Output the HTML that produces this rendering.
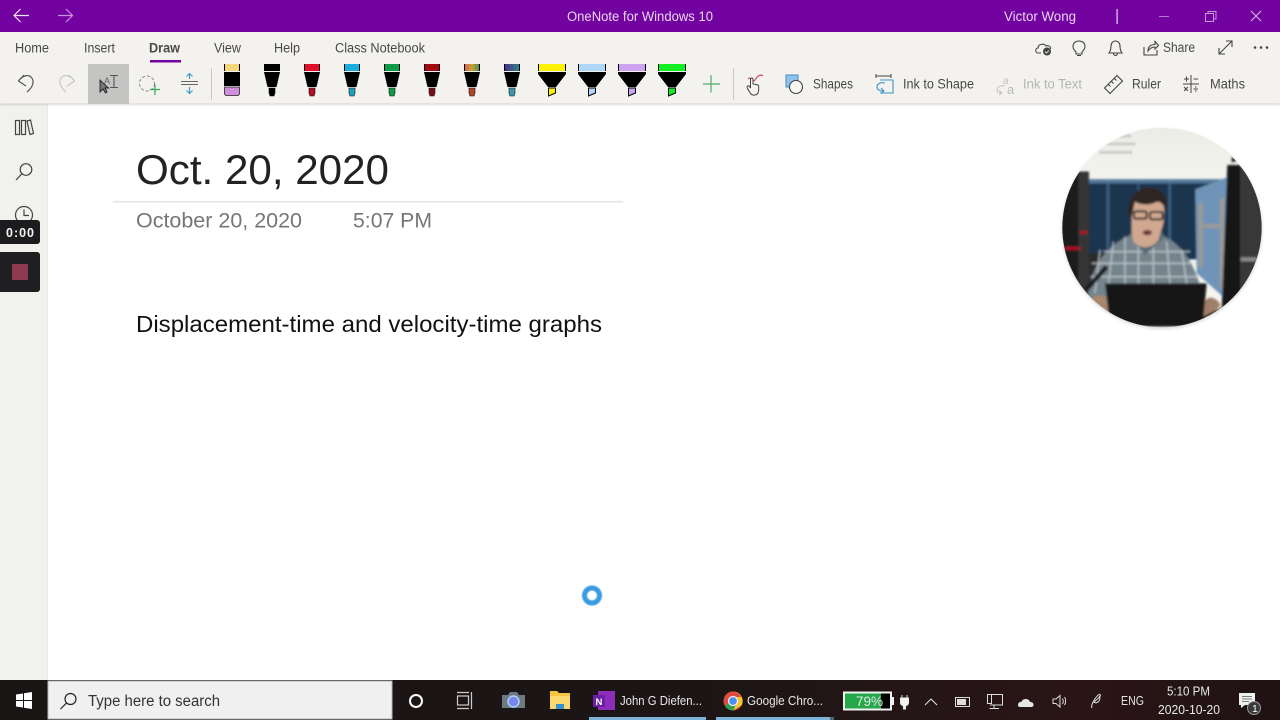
<!DOCTYPE html>
<html lang="en"><head><meta charset="utf-8"><title>OneNote for Windows 10</title>
<style>
html,body{margin:0;padding:0;width:1280px;height:720px;overflow:hidden;background:#fff}
svg{display:block;position:absolute;left:0;top:0;filter:blur(.3px)}
text{font-family:"Liberation Sans",sans-serif;white-space:pre}
</style></head><body>
<svg width="1280" height="720" viewBox="0 0 1280 720" xmlns="http://www.w3.org/2000/svg">
<defs>
<linearGradient id="tb" x1="0" x2="1" y1="0" y2="0"><stop offset="0" stop-color="#191515"/><stop offset=".55" stop-color="#1d1515"/><stop offset=".85" stop-color="#2a1516"/><stop offset="1" stop-color="#1f1214"/></linearGradient>
<linearGradient id="rb" x1="0" x2="1" y1="0" y2="0"><stop offset="0" stop-color="#d85c52"/><stop offset=".5" stop-color="#c9a030"/><stop offset="1" stop-color="#3a8f56"/></linearGradient>
<linearGradient id="nb" x1="0" x2="1" y1="0" y2="0"><stop offset="0" stop-color="#4b2a8c"/><stop offset="1" stop-color="#2d8a85"/></linearGradient>
<linearGradient id="wall" x1="0" x2="0" y1="0" y2="1"><stop offset="0" stop-color="#ecece6"/><stop offset=".3" stop-color="#f6f6f0"/></linearGradient>
<filter id="bl" x="-5%" y="-5%" width="110%" height="110%"><feGaussianBlur stdDeviation="3.500"/></filter>
<filter id="sh" x="-20%" y="-20%" width="140%" height="140%"><feGaussianBlur stdDeviation="1.500"/></filter>
<filter id="s1"><feGaussianBlur stdDeviation=".6"/></filter>
<filter id="s2" x="-50%" y="-50%" width="200%" height="200%"><feGaussianBlur stdDeviation=".5"/></filter>
<clipPath id="cam"><circle cx="336" cy="323" r="299"/></clipPath>
<g id="pen">
<rect x="-8" y="64" width="16" height="7" fill="var(--c)"/>
<path d="M-7.500 64v7M7.500 64v7" stroke="#000" stroke-width="1"/>
<path d="M-8 72H8L4.500 87H-4.500Z" fill="#000"/>
<path d="M-3 88H3V93L2 96H-2L-3 93Z" fill="var(--t)" stroke="#111" stroke-width=".6"/>
</g>
<g id="hl">
<rect x="-14" y="64" width="28" height="7" fill="var(--c)"/>
<path d="M-13.500 64v7M13.500 64v7" stroke="#000" stroke-width="1"/>
<path d="M-14 72H14V74L4 87H-4L-14 74Z" fill="#000"/>
<path d="M-3.500 88H3.500V93L-3.500 96Z" fill="var(--c)" stroke="#000" stroke-width="1"/>
</g>
</defs>

<!-- title bar -->
<rect width="1280" height="32" fill="#7303a1"/>
<g fill="none" stroke="#eee3f3" stroke-width="1.200"><path d="M14 15.500H29M20.500 9L14 15.500L20.500 22"/></g>
<g fill="none" stroke="#c88fdb" stroke-width="1.200"><path d="M58 15.500H72M66 9L72.500 15.500L66 22"/></g>
<text x="567" y="21" font-size="13.500" fill="#e8d6f0" textLength="146" lengthAdjust="spacingAndGlyphs">OneNote for Windows 10</text>
<text x="1004" y="21" font-size="13.500" fill="#e8d6f0" textLength="72" lengthAdjust="spacingAndGlyphs">Victor Wong</text>
<rect x="1116.500" y="9" width="1.200" height="15" fill="#e8d6f0"/>
<rect x="1159" y="16" width="10" height="1" fill="#b878d0"/>
<g fill="none" stroke="#c39ad6" stroke-width="1"><rect x="1205.500" y="13.500" width="8" height="8"/><path d="M1208 13.500V11.500H1216V19H1213.500"/></g>
<path d="M1251 11L1261 21M1261 11L1251 21" stroke="#d9bde5" stroke-width="1"/>

<!-- ribbon -->
<rect y="32" width="1280" height="72" fill="#f3f2ef"/>
<rect x="0" y="104" width="48" height="576" fill="#f1f1ee"/>
<rect x="0" y="103.500" width="1280" height="2" fill="#000" opacity=".1" filter="url(#s1)"/>
<rect x="47" y="106" width="1" height="574" fill="#e9e9e7"/>
<g font-size="13.500" fill="#484848">
<text x="15" y="52.500" textLength="34" lengthAdjust="spacingAndGlyphs">Home</text>
<text x="84" y="52.500" textLength="31" lengthAdjust="spacingAndGlyphs">Insert</text>
<text x="149" y="52.500" textLength="31" lengthAdjust="spacingAndGlyphs" font-weight="700" fill="#4a4a4a">Draw</text>
<text x="214" y="52.500" textLength="27" lengthAdjust="spacingAndGlyphs">View</text>
<text x="274" y="52.500" textLength="26" lengthAdjust="spacingAndGlyphs">Help</text>
<text x="335" y="52.500" textLength="90" lengthAdjust="spacingAndGlyphs">Class Notebook</text>
<text x="1163" y="52" textLength="32" lengthAdjust="spacingAndGlyphs">Share</text>
<text x="813" y="88.500" textLength="40" lengthAdjust="spacingAndGlyphs">Shapes</text>
<text x="903" y="88.500" textLength="71" lengthAdjust="spacingAndGlyphs">Ink to Shape</text>
<text x="1023" y="88.500" textLength="59" lengthAdjust="spacingAndGlyphs" fill="#b4b4b2">Ink to Text</text>
<text x="1132" y="88.500" textLength="29" lengthAdjust="spacingAndGlyphs">Ruler</text>
<text x="1210" y="88.500" textLength="35" lengthAdjust="spacingAndGlyphs">Maths</text>
</g>
<rect x="150" y="60" width="31" height="2.500" fill="#7303a1"/>

<!-- toolbar left -->
<g fill="none" stroke="#555" stroke-width="1.200"><path d="M24 75L18.500 81L26 86M18.500 81C22 76 28 74 31 77C35 81 33 87 27 92"/></g>
<g fill="none" stroke="#c6c6c4" stroke-width="1.200"><path d="M69 75L74.500 81L67 86M74.500 81C71 76 65 74 62 77C58 81 60 87 66 92"/></g>
<rect x="88" y="64" width="41" height="40" fill="#c4c4c2"/>
<text x="104" y="84" font-size="9" fill="#666">A</text>
<path d="M110 75.500H118M114 75.500V87.500M110 87.500H118" stroke="#555" stroke-width="1.100" fill="none"/>
<path d="M100 80V92L103 89L105.500 93L107 92L105 88H108.500Z" fill="#777" stroke="#222" stroke-width=".9"/>
<circle cx="147" cy="83.500" r="7.500" fill="none" stroke="#888" stroke-width="1" stroke-dasharray="3 2"/>
<path d="M155 84.500V95M150 89.500H160" stroke="#3aa653" stroke-width="1.200"/>
<path d="M181 81.500H198M181 84.500H198" stroke="#666" stroke-width="1"/>
<path d="M189.500 79V73.500M186.500 76.500L189.500 73.500L192.500 76.500M189.500 87V93.500M186.500 90.500L189.500 93.500L192.500 90.500" stroke="#3a97c9" stroke-width="1.100" fill="none"/>
<rect x="211" y="68" width="1" height="32" fill="#c8c8c6"/>

<!-- eraser -->
<rect x="224" y="64" width="16" height="7" fill="#f3d67e"/><path d="M224.500 64v7M239.500 64v7" stroke="#000"/>
<rect x="224" y="72" width="16" height="14" fill="#000"/>
<path d="M224.500 87H239.500V93Q239.500 95.500 237 95.500H227Q224.500 95.500 224.500 93Z" fill="#cf8fdd" stroke="#222" stroke-width=".8"/>
<!-- pens -->
<use href="#pen" x="272" style="--c:#000;--t:#000"/>
<use href="#pen" x="312" style="--c:#e2102a;--t:#b30f2a"/>
<use href="#pen" x="352" style="--c:#18aee0;--t:#20a0c0"/>
<use href="#pen" x="392" style="--c:#0f9a45;--t:#0f9a45"/>
<use href="#pen" x="432" style="--c:#a00a10;--t:#7b1015"/>
<use href="#pen" x="472" style="--c:url(#rb);--t:#b0452c"/>
<use href="#pen" x="512" style="--c:url(#nb);--t:#3d9aa5"/>
<use href="#hl" x="552" style="--c:#fff200"/>
<use href="#hl" x="592" style="--c:#aed6f8"/>
<use href="#hl" x="632" style="--c:#cda2f2"/>
<use href="#hl" x="672" style="--c:#12ef20"/>
<path d="M711 75V92.500M703 84H720" stroke="#4cae68" stroke-width="1.200"/>
<rect x="733" y="68" width="1" height="32" fill="#c8c8c6"/>
<!-- ink replay hand -->
<path d="M748 79C751 76 752 83 755 80C757 77 759 74 763 75.500" fill="none" stroke="#d2474f" stroke-width="1.200"/>
<path d="M751 94C749 91 746 87 747.500 86C749 85 750 87 750.500 88V79.500C750.500 77.500 753 77.500 753 79.500V84L758 85C759 86 759 90 758 93C757 95 753 96 751 94Z" fill="#f3f2ef" stroke="#444" stroke-width="1"/>
<!-- shapes -->
<rect x="786" y="75" width="12" height="12" fill="#8fc1ea" stroke="#3f8fcf" stroke-width="1"/>
<circle cx="796" cy="87" r="6.500" fill="#f6f6f4" stroke="#444" stroke-width="1.100"/>
<!-- ink to shape -->
<path d="M876 76H891M876 74V78M891 74V78" stroke="#444" stroke-width="1" fill="none"/>
<path d="M880 80H893V93H880" fill="none" stroke="#3a97c9" stroke-width="1.100"/>
<path d="M885 83C880 82 877 84 877 87C877 90 880 91 884 91M881 88L884 91L881 93" fill="none" stroke="#3a97c9" stroke-width="1.100"/>
<!-- ink to text -->
<text x="1003" y="84" font-size="10" font-style="italic" fill="#c0c0be">a</text>
<text x="1007" y="94" font-size="13" fill="#b8b8b6">a</text>
<path d="M1005 86C1000 85 997 87 997 90C997 92 999 93 1002 93M999 90.500L1002 93L999 95" fill="none" stroke="#c4c4c2" stroke-width="1"/>
<!-- ruler -->
<path d="M1104.500 88L1117 75.500L1122.500 81L1110 93.500Z M1108.500 84.500L1110.500 86.500M1111.500 81.500L1113.500 83.500M1114.500 78.500L1116.500 80.500" fill="none" stroke="#444" stroke-width="1.100"/>
<!-- maths -->
<path d="M1191 75V93M1183 84H1199M1184 79H1189M1186.500 76.500V81.500M1193.500 79H1198M1184 87L1188 91M1188 87L1184 91M1193.500 89H1198" stroke="#444" stroke-width="1" fill="none"/>
<circle cx="1195.800" cy="87" r=".7" fill="#444"/><circle cx="1195.800" cy="91" r=".7" fill="#444"/>

<!-- top right icons -->
<path d="M1041 53H1038C1035 53 1035 48 1038 48C1038 44 1044 43 1046 46C1049 45 1051 47 1050.500 49" fill="none" stroke="#444" stroke-width="1.100"/>
<circle cx="1047" cy="51.500" r="4" fill="#444"/><path d="M1045 51.500L1046.500 53L1049 50.500" stroke="#fff" stroke-width=".8" fill="none"/>
<path d="M1076 52C1074 50 1073 48.500 1073 46.500C1073 43 1075.500 41 1079 41C1082.500 41 1085 43 1085 46.500C1085 48.500 1084 50 1082 52V54H1076ZM1077 55.500H1081" fill="none" stroke="#444" stroke-width="1.100"/>
<path d="M1109 53C1110.500 51 1111 49 1111 46C1111 43 1113 41 1115.500 41C1118 41 1120 43 1120 46C1120 49 1120.500 51 1122 53ZM1113.500 53.500C1113.500 56 1117.500 56 1117.500 53.500" fill="none" stroke="#444" stroke-width="1.100"/>
<path d="M1144 47V55H1157V50M1148 51C1148 46 1151 44.500 1155 44.500V41.500L1158.500 45.500L1155 49V47C1152 47 1150 48 1148 51Z" fill="none" stroke="#444" stroke-width="1.100"/>
<path d="M1219 54L1232 41M1226 41H1232V47M1219 48V54H1225" fill="none" stroke="#444" stroke-width="1.100"/>
<g fill="#444"><circle cx="1255" cy="47.500" r="1.300"/><circle cx="1261" cy="47.500" r="1.300"/><circle cx="1267" cy="47.500" r="1.300"/></g>

<!-- sidebar icons -->
<g fill="none" stroke="#444" stroke-width="1.200">
<rect x="15.500" y="120.500" width="4" height="14"/><rect x="21.500" y="120.500" width="4" height="14"/><path d="M27 121L30.500 120L33.500 133.500L30 134.500Z"/>
<circle cx="26" cy="169.500" r="5.800"/><path d="M21.800 173.800L16 180"/>
<circle cx="24" cy="215" r="8.500"/><path d="M24 209.500V215.500H29"/>
</g>

<!-- recorder -->
<rect x="-6" y="220" width="46" height="24" rx="3" fill="#1c1c1e"/>
<text x="6" y="237" font-size="12.500" font-weight="700" fill="#f5f5f5" textLength="28" lengthAdjust="spacing">0:00</text>
<rect x="-6" y="252" width="46" height="40" rx="3" fill="#1f1e20"/>
<rect x="12" y="264" width="16" height="16" fill="#8b3a50"/>

<!-- page content -->
<g>
<text x="136" y="184" font-size="42" fill="#222" textLength="253" lengthAdjust="spacingAndGlyphs">Oct. 20, 2020</text>
<rect x="113" y="201" width="510" height="1.500" fill="#e4e4e4"/>
<text x="136" y="227.500" font-size="21.500" fill="#767676" textLength="166" lengthAdjust="spacingAndGlyphs">October 20, 2020</text>
<text x="353" y="227.500" font-size="21.500" fill="#767676" textLength="79" lengthAdjust="spacingAndGlyphs">5:07 PM</text>
<text x="136" y="332" font-size="23" fill="#111" textLength="466" lengthAdjust="spacingAndGlyphs">Displacement-time and velocity-time graphs</text>
</g>

<!-- busy cursor -->
<circle cx="592" cy="595.500" r="7.500" fill="none" stroke="#3a9be0" stroke-width="5" filter="url(#s2)"/>

<!-- webcam -->
<circle cx="1162" cy="229" r="100" fill="#000" opacity=".15" filter="url(#sh)"/>
<g transform="translate(1050 120) scale(.33333)">
<g clip-path="url(#cam)">
<rect x="30" y="20" width="620" height="620" fill="url(#wall)"/>
<g filter="url(#bl)">
<path d="M190 48H245M170 72H258M150 97H245" stroke="#a8a8a8" stroke-width="7" stroke-dasharray="7 4"/>
<rect x="115" y="178" width="400" height="240" fill="#1d3450"/>
<rect x="115" y="178" width="400" height="12" fill="#54789c"/>
<rect x="170" y="190" width="8" height="210" fill="#3d6184"/><rect x="262" y="190" width="6" height="190" fill="#36597b"/><rect x="355" y="190" width="8" height="200" fill="#3a5f82"/>
<rect x="115" y="400" width="60" height="130" fill="#2a2a2a"/>
<rect x="25" y="155" width="92" height="430" fill="#1e1e1e"/>
<rect x="85" y="155" width="32" height="400" fill="#363636"/>
<path d="M90 337H112M45 385H92" stroke="#b01020" stroke-width="9"/>
<path d="M436 208L535 170V550L525 535L440 460Z" fill="#6f94b8"/>
<path d="M452 250V440M516 235V505M452 318H516" stroke="#9a9a98" stroke-width="13" fill="none"/>
<path d="M532 135H572V520L515 570Z" fill="#141414"/>
<rect x="572" y="140" width="70" height="420" fill="#383838"/>
<rect x="572" y="412" width="48" height="12" fill="#8a8a88"/>
<path d="M545 110L565 120L545 128Z" fill="#222"/>
<!-- person -->
<path d="M114 525C125 450 150 390 240 345L345 350C400 380 430 430 450 495L470 560H120Z" fill="#74848c"/>
<g stroke="#d3dbe0" stroke-width="4" opacity=".75"><path d="M150 390L135 520M190 365L175 500M225 350V490M265 380V490M310 370V490M350 365L360 490M395 390L410 490M125 430H440M122 470H445M160 395H420"/></g>
<path d="M240 345L285 405L345 350L330 330H250Z" fill="#5a6a74"/>
<path d="M245 340V290C240 260 240 240 265 230H320C345 240 345 270 340 310L325 360C310 385 270 390 250 365Z" fill="#d0a890"/>
<path d="M236 285C230 235 260 200 300 203C340 205 360 240 345 275C345 255 330 240 315 248C290 260 260 250 255 245C250 260 250 275 245 290Z" fill="#2f2722"/>
<rect x="252" y="274" width="38" height="22" rx="5" fill="none" stroke="#1c1c1c" stroke-width="6"/>
<rect x="300" y="276" width="38" height="22" rx="5" fill="none" stroke="#1c1c1c" stroke-width="6"/>
<ellipse cx="292" cy="338" rx="14" ry="8" fill="#6b3a38"/>
<path d="M108 510L170 440" stroke="#1c1c1c" stroke-width="14"/>
<path d="M128 530C170 515 220 555 235 585L205 602L128 565Z" fill="#a9886f"/>
<path d="M455 560C465 525 495 525 512 555L470 600H450Z" fill="#9f7f69"/>
<path d="M165 490H470L458 620H180Z" fill="#191918"/>
<path d="M100 560L190 600L200 640H100Z" fill="#151515"/>
<path d="M460 590L540 550V640H440Z" fill="#151515"/>
</g>
</g>
</g>

<!-- taskbar -->
<rect y="680" width="1280" height="40" fill="url(#tb)"/>
<path d="M16 694.500L23 693.500V700H16ZM24 693.300L32 692V700H24ZM16 701H23V707.500L16 706.500ZM24 701H32V709L24 707.700Z" fill="#fff"/>
<rect x="48" y="681" width="344" height="38" fill="#f0f0f0"/>
<rect x="48" y="681" width="344" height="38" fill="none" stroke="#b8b8b8" stroke-width="1"/>
<g fill="none" stroke="#222" stroke-width="1.200"><circle cx="70.500" cy="699" r="5.500"/><path d="M66.500 703L60.500 709"/></g>
<text x="88" y="706" font-size="15.500" fill="#333" textLength="132" lengthAdjust="spacingAndGlyphs">Type here to search</text>
<circle cx="416" cy="701" r="6" fill="none" stroke="#fff" stroke-width="2"/>
<g fill="none" stroke="#ccc" stroke-width="1.200"><rect x="457.500" y="696" width="11" height="9"/><path d="M457 692.500H469M457 708.500H469M471.500 692V709"/></g>
<!-- camera -->
<path d="M502 695H508L510 692H517L519 695H525V708H502Z" fill="#6f7982"/>
<circle cx="513.500" cy="701.500" r="5.500" fill="#7a86f0" stroke="#a9d3f0" stroke-width="1.500"/>
<!-- folder -->
<path d="M550 691H557L559 693H570V709H550Z" fill="#f5c542"/>
<rect x="550" y="696" width="20" height="13" fill="#fbd872"/>
<rect x="556" y="704" width="8" height="5" fill="#3c8fd0"/>
<!-- onenote -->
<rect x="598" y="691" width="17" height="19" fill="#8f2dbb"/>
<rect x="593" y="695" width="12" height="12" fill="#6b1fa3"/>
<text x="595.500" y="705" font-size="9.500" font-weight="700" fill="#fff">N</text>
<rect x="589" y="717" width="117" height="3" fill="#7db3d8"/>
<text x="620" y="705" font-size="13" fill="#e8e8e8" textLength="82" lengthAdjust="spacingAndGlyphs">John G Diefen...</text>
<!-- chrome -->
<circle cx="733" cy="701" r="9.500" fill="#e04a3c"/>
<path d="M733 701L724.800 705.800A9.500 9.500 0 0 0 733 710.500L738 703Z" fill="#2f9e4f"/>
<path d="M733 691.500A9.500 9.500 0 0 1 741.500 705.500L733 710.500L738 701Z" fill="#f6c42f"/>
<path d="M733 691.500A9.500 9.500 0 0 0 724.800 696.300L729 703L733 697H741.200A9.500 9.500 0 0 0 733 691.500Z" fill="#e04a3c"/>
<circle cx="733" cy="701" r="4.500" fill="#4c8df0" stroke="#f0f0f0" stroke-width="1.300"/>
<rect x="716" y="717" width="114" height="3" fill="#7db3d8"/>
<rect x="830" y="717" width="4" height="3" fill="#7db3d8" opacity=".5"/>
<text x="747" y="705" font-size="13" fill="#e8e8e8" textLength="76" lengthAdjust="spacingAndGlyphs">Google Chro...</text>
<!-- battery -->
<rect x="844" y="692.500" width="47" height="17" fill="#000" stroke="#f2f2f2" stroke-width="2"/>
<rect x="845" y="693.500" width="36" height="15" fill="#25a84a"/>
<rect x="891" y="697" width="3" height="8" fill="#f2f2f2"/>
<text x="856" y="706" font-size="13.500" fill="#e8e8e8" textLength="27" lengthAdjust="spacingAndGlyphs">79%</text>
<path d="M902 695V698M907 695V698M900.500 698H908.500V703C908.500 705 906.500 705.500 905.500 706V709H903.500V706C902.500 705.500 900.500 705 900.500 703Z" fill="#f2f2f2" stroke="#f2f2f2" stroke-width=".9"/>
<path d="M925 705L931 699L937 705" fill="none" stroke="#ddd" stroke-width="1.100"/>
<!-- tray -->
<g fill="none" stroke="#ddd" stroke-width="1">
<rect x="955.500" y="697.500" width="14" height="9"/>
<path d="M987.500 694.500H1002.500V705H990M994 705V708.500M989.500 708.500H999"/><rect x="987.500" y="694.500" width="4" height="9"/>
<path d="M1053 699H1056L1060 695.500V707L1056 703.500H1053ZM1062.500 698.500C1063.500 700 1063.500 702.500 1062.500 704M1064.500 697C1066 699 1066 703 1064.500 705"/>
<path d="M1092 708C1090 705 1098 693 1100 694.500C1102 696 1096 700 1094 702C1097 705 1102 699 1099 696"/>
</g>
<rect x="957" y="699" width="9" height="6" fill="#ddd"/>
<path d="M1020 707C1016.500 707 1018 701 1021.500 702C1022.500 698 1029 698 1030 702C1034 701.500 1035 707 1031 707Z" fill="#e6e6e6"/>
<text x="1121" y="705" font-size="12.500" fill="#e0e0e0" textLength="23" lengthAdjust="spacingAndGlyphs">ENG</text>
<text x="1167" y="695.500" font-size="12.500" fill="#e8e8e8" textLength="43" lengthAdjust="spacingAndGlyphs">5:10 PM</text>
<text x="1158" y="714" font-size="12.500" fill="#e8e8e8" textLength="62" lengthAdjust="spacingAndGlyphs">2020-10-20</text>
<!-- notification -->
<path d="M1239 693H1255V705H1245L1241 708V705H1239Z" fill="#f0f0f0"/>
<path d="M1242 696.500H1252M1242 699H1252M1242 701.500H1249" stroke="#555" stroke-width=".8"/>
<circle cx="1254" cy="708" r="6.500" fill="#3a3a3a" stroke="#999" stroke-width="1"/>
<text x="1252" y="712" font-size="10.500" fill="#fff">1</text>
</svg>
</body></html>
